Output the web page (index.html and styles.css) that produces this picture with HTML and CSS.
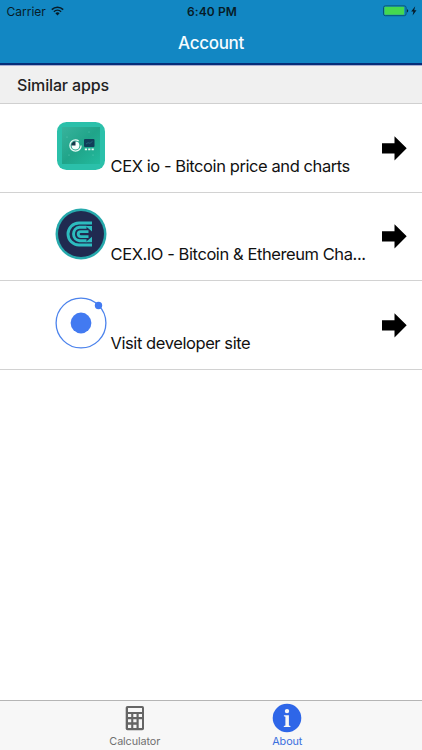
FILE: index.html
```html
<!DOCTYPE html>
<html lang="en">
<head>
  <meta charset="UTF-8" />
  <meta name="viewport" content="width=device-width, initial-scale=1.0"/>
  <title>Account</title>
  <link rel="stylesheet" href="styles.css">
</head>

<body>
  <div class="app">
    <!-- Header -->
    <header class="header">
      <div class="status-bar">
        <div class="status-left">
          <span class="carrier">Carrier</span>
          <svg class="wifi" width="13" height="10" viewBox="0 0 13 10" fill="none" stroke="#071c28">
            <path d="M.8 3.6a8.2 8.2 0 0 1 11.4 0" stroke-width="1.6"/>
            <path d="M2.9 5.8a5.2 5.2 0 0 1 7.2 0" stroke-width="1.5"/>
            <path d="M4.4 7.3a3 3 0 0 1 4.2 0L6.5 9.5z" fill="#071c28" stroke="none"/>
          </svg>
        </div>
        <span class="time">6:40 PM</span>
        <div class="status-right">
          <svg width="34" height="12" viewBox="0 0 34 12">
            <rect x=".5" y=".9" width="22.6" height="9.8" rx="1.8" fill="none" stroke="#0a5474"/>
            <rect x="1.4" y="1.8" width="19.8" height="8" rx=".8" fill="#45d84f"/>
            <path d="M24 4.2c1.7.3 1.7 2.9 0 3.2z" fill="#06283c"/>
            <path d="M32.2 1.2 28.2 6.5h2.2L29.6 10.4 33.5 5.3h-2.3z" fill="#071c28"/>
          </svg>
        </div>
      </div>
      <h1 class="title">Account</h1>
    </header>

    <!-- Apps list -->
    <main class="content">
      <h2 class="list-header">Similar apps</h2>
      <a class="item">
        <svg class="item-icon" viewBox="0 0 52 52">
          <defs>
            <linearGradient id="teal" x1="0" y1="0" x2="1" y2="1">
              <stop offset="0" stop-color="#38b39c"/>
              <stop offset=".5" stop-color="#20a489"/>
              <stop offset="1" stop-color="#22bb9e"/>
            </linearGradient>
          </defs>
          <rect x="2" y="2" width="48" height="48" rx="9.5" fill="#2bc0aa"/>
          <rect x="7" y="7" width="38" height="37" fill="url(#teal)"/>
          <circle cx="20.5" cy="25.5" r="5.6" fill="none" stroke="#eafaf5" stroke-width="1.3" stroke-dasharray="29 6.2"/>
          <circle cx="20.5" cy="25.5" r="3.9" fill="#f6fffc"/>
          <path d="M20.5 25.5v-4.3a4.3 4.3 0 0 0-4.3 4.3z" fill="#123b49"/>
          <rect x="29" y="19" width="10.5" height="8" rx="1" fill="#113c58"/>
          <path d="m31 24 2-1.3 2 .6 2.5-2" fill="none" stroke="#267587" stroke-width=".7"/>
          <path d="M29.8 29.4h2.2M33.2 29.4h2.2M36.6 29.4h2.2" stroke="#e9faf4" stroke-width="1.7"/>
          <g fill="#62cbb6">
            <circle cx="12" cy="17" r=".6"/>
            <circle cx="14" cy="35" r=".6"/>
            <circle cx="38" cy="35" r=".6"/>
            <circle cx="34" cy="12" r=".5"/>
          </g>
        </svg>
        <span class="item-text">CEX io - Bitcoin price and charts</span>
        <svg class="arrow" viewBox="0 0 25 25"><path d="M0 7.3h12.5V.2L24.7 12.3 12.5 24.5v-7.1H0z"/></svg>
      </a>
      <a class="item">
        <svg class="item-icon" viewBox="0 0 52 52">
          <circle cx="26" cy="26" r="25.5" fill="#26a9ac"/>
          <circle cx="26" cy="26" r="23" fill="#202a50"/>
          <g fill="none" stroke="#2dbcbf" stroke-width="2.9">
            <path d="M37 15H24a11 11 0 0 0 0 22h13"/>
            <path d="M31.5 19.3h-7a6.8 6.8 0 0 0 0 13.5h7"/>
            <path d="M33.5 23.6h-7.8a2.5 2.5 0 0 0 0 5h7.8"/>
          </g>
          <path d="M30.5 17.9H37v5.5zM30.5 34.2H37v-5.4z" fill="#2dbcbf"/>
        </svg>
        <span class="item-text">CEX.IO - Bitcoin &amp; Ethereum Cha...</span>
        <svg class="arrow" viewBox="0 0 25 25"><path d="M0 7.3h12.5V.2L24.7 12.3 12.5 24.5v-7.1H0z"/></svg>
      </a>
      <a class="item">
        <svg class="item-icon" viewBox="0 0 52 52">
          <circle cx="26" cy="26" r="24.9" fill="none" stroke="#4c83ec" stroke-width="1.3"/>
          <circle cx="26" cy="26" r="10.4" fill="#427af1"/>
          <circle cx="43.5" cy="8.5" r="3.7" fill="#427af1"/>
        </svg>
        <span class="item-text">Visit developer site</span>
        <svg class="arrow" viewBox="0 0 25 25"><path d="M0 7.3h12.5V.2L24.7 12.3 12.5 24.5v-7.1H0z"/></svg>
      </a>
    </main>

    <!-- Bottom tabs -->
    <nav class="tabs">
      <a class="tab">
        <svg width="30" height="30" viewBox="0 0 30 30">
          <rect x="5.7" y="3" width="18.3" height="24.3" rx="1.8" fill="#656565"/>
          <g fill="#f7f7f7">
            <path d="M8 5h14v4H8z"/>
            <path d="M8 11h3.2v3H8zM13.3 11h3.2v3h-3.2zM18.7 11H22v3h-3.3z"/>
            <path d="M8 16.3h3.2v3H8zM13.3 16.3h3.2v3h-3.2zM18.7 16.3H22V25h-3.3z"/>
            <path d="M8 21.7h3.2V25H8zM13.3 21.7h3.2V25h-3.2z"/>
          </g>
        </svg>
        <span class="tab-label">Calculator</span>
      </a>
      <a class="tab active">
        <svg width="30" height="30" viewBox="0 0 30 30">
          <circle cx="15" cy="15" r="14.3" fill="#2e66e8"/>
          <circle cx="15" cy="8.1" r="2.2" fill="#f7f7f7"/>
          <path d="M11.9 12.2h5v10.2l1.5.5v1h-6.6v-1l1.6-.5v-8.7l-1.5-.5z" fill="#f7f7f7"/>
        </svg>
        <span class="tab-label">About</span>
      </a>
    </nav>
  </div>
</body>
</html>
```
FILE: styles.css
```css
* {
  margin: 0;
  padding: 0;
  box-sizing: border-box;
}

body {
  font-family: Inter, sans-serif;
  background-color: #fff;
  color: #111;
  overflow: hidden;
}

svg {
  display: block;
  flex-shrink: 0;
}

.app {
  display: flex;
  flex-direction: column;
  height: 750px;
}

.header {
  height: 66px;
  background-color: #1287c3;
  border-bottom: 1px solid #a9add0;
  box-shadow: inset 0 -2px 0 #062d78;
}

.status-bar {
  display: grid;
  grid-template-columns: 1fr auto 1fr;
  align-items: center;
  height: 22px;
  padding: 0 5.5px 0 6.5px;
  color: #071c28;
  font-size: 12px;
}

.status-left {
  display: flex;
  align-items: center;
  gap: 5px;
}

.time {
  padding-left: 1px;
  font-weight: 600;
  letter-spacing: 0.1px;
}

.status-right {
  display: flex;
  justify-content: flex-end;
}

.title {
  height: 43px;
  line-height: 43px;
  color: #f5fcff;
  font-size: 17px;
  font-weight: 500;
  letter-spacing: -0.3px;
  text-align: center;
}

.content {
  flex: 1;
}

.list-header {
  height: 38px;
  padding-left: 17px;
  line-height: 38px;
  background-color: #f0f0f0;
  border-bottom: 1px solid #d0d0d0;
  color: #222;
  font-size: 16px;
  font-weight: 500;
  letter-spacing: -0.15px;
}

.item {
  display: flex;
  align-items: center;
  height: 88.6px;
  padding: 0 15px 0 55px;
  border-bottom: 1px solid #d2d2d2;
}

.item-icon {
  width: 52px;
  height: 52px;
  margin-top: -4px;
}

.item-text {
  flex: 1;
  margin-left: 3.5px;
  padding-top: 36px;
  font-size: 16.5px;
  line-height: 20px;
  letter-spacing: -0.42px;
  white-space: nowrap;
}

.arrow {
  width: 25px;
  height: 25px;
  margin-top: 1px;
  fill: #000;
}

.tabs {
  display: flex;
  justify-content: center;
  height: 50px;
  background-color: #f7f7f7;
  border-top: 1px solid #b5b5b5;
}

.tab {
  display: flex;
  flex-direction: column;
  align-items: center;
  width: 152.5px;
  padding-top: 2px;
  color: #707070;
}

.tab-label {
  margin-top: 1px;
  font-size: 10.8px;
  line-height: 15px;
  letter-spacing: -0.1px;
}

.tab.active {
  color: #3b6fde;
}
```
